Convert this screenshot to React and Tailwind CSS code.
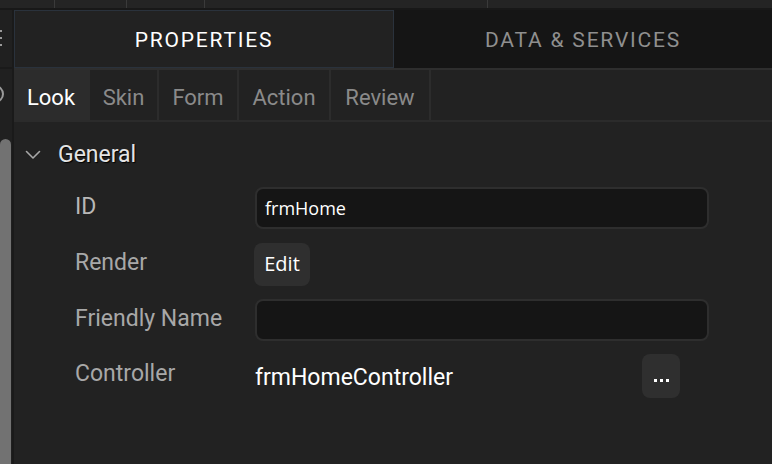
import React from "react";

function Chevron() {
  return (
    <svg width="16" height="10" viewBox="0 0 16 10" fill="none">
      <path d="M1.5 1.5 L8 8 L14.5 1.5" stroke="#a8a8a8" strokeWidth="1.6" strokeLinecap="round" strokeLinejoin="round" />
    </svg>
  );
}

export default function App() {
  const subtabs = [
    { label: "Look", w: "w-[76px]", active: true },
    { label: "Skin", w: "w-[69px]" },
    { label: "Form", w: "w-[80px]" },
    { label: "Action", w: "w-[92px]" },
    { label: "Review", w: "w-[100px]" },
  ];
  return (
    <div className="w-[772px] h-[464px] overflow-hidden bg-[#222222] flex flex-col font-['Roboto',sans-serif]">
      {/* top strip */}
      <div className="h-[10px] flex bg-[#242424] border-b-2 border-[#181818] shrink-0">
        <div className="w-[55px] border-r border-[#3a3a3a]" />
        <div className="w-[72px] border-r border-[#3a3a3a]" />
        <div className="w-[78px] border-r border-[#3a3a3a]" />
        <div className="w-[283px] border-r border-[#3a3a3a]" />
        <div className="flex-1" />
      </div>
      <div className="flex flex-1 min-h-0">
        {/* left sidebar */}
        <div className="w-[14px] shrink-0 flex flex-col bg-[#202020] border-r-2 border-[#1a1a1a]">
          <div className="h-[59px] border-b-2 border-[#1a1a1a] relative overflow-hidden">
            <div className="absolute left-[-6px] top-[20px] w-[8px] flex flex-col gap-[5px]">
              <div className="h-[2px] bg-[#9a9a9a]" />
              <div className="h-[2px] bg-[#9a9a9a]" />
              <div className="h-[2px] bg-[#9a9a9a]" />
            </div>
          </div>
          <div className="h-[70px] relative overflow-hidden">
            <div className="absolute left-[-14px] top-[16px] w-[18px] h-[18px] rounded-full border-2 border-[#9a9a9a]" />
          </div>
          <div className="flex-1 mr-[1px] bg-[#727272] rounded-t-[6px]" />
        </div>
        {/* main */}
        <div className="flex-1 flex flex-col">
          {/* header tabs */}
          <div className="h-[60px] flex border-b-2 border-[#2e2e2e] shrink-0">
            <div className="w-[380px] pt-[3px] bg-[#222222] border border-[#2a323c] flex items-center justify-center text-white text-[21px] tracking-[1.8px]">
              PROPERTIES
            </div>
            <div className="flex-1 pt-[3px] bg-[#151515] flex items-center justify-center text-[#8f8f8f] text-[21px] tracking-[1.8px]">
              DATA &amp; SERVICES
            </div>
          </div>
          {/* subtabs */}
          <div className="h-[52px] flex border-b-2 border-[#2b2b2b] shrink-0">
            {subtabs.map((t) => (
              <div
                key={t.label}
                className={`${t.w} pt-[4px] flex items-center justify-center border-r-2 border-[#2c2c2c] text-[22px] ${
                  t.active ? "bg-[#2c2c2c] text-white" : "text-[#8a8a8a]"
                }`}
              >
                {t.label}
              </div>
            ))}
            <div className="flex-1" />
          </div>
          {/* content */}
          <div className="pt-[13px] flex flex-col">
            <div className="h-[40px] flex items-center">
              <div className="w-[44px] pl-[11px] flex items-center">
                <Chevron />
              </div>
              <span className="text-[23px] text-[#e4e4e4] [text-shadow:1px_1px_1px_#000]">General</span>
            </div>
            <div className="h-[5px]" />
            <div className="h-[56px] flex items-center">
              <div className="w-[241px] pl-[61px] text-[23px] text-[#b8b8b8] -mt-[2px]">ID</div>
              <div className="w-[454px] h-[42px] rounded-[8px] bg-[#151515] border-2 border-[#2e2e2e] flex items-center pl-[8px] text-[18px] text-white font-['Open_Sans',sans-serif]">
                frmHome
              </div>
            </div>
            <div className="h-[56px] flex items-center">
              <div className="w-[240px] pl-[61px] text-[23px] text-[#a8a8a8] -mt-[2px]">Render</div>
              <div className="w-[56px] h-[43px] rounded-[8px] bg-[#2f2f2f] flex items-center justify-center text-[20px] text-white font-['Open_Sans',sans-serif]">
                Edit
              </div>
            </div>
            <div className="h-[56px] flex items-center">
              <div className="w-[241px] pl-[61px] text-[23px] text-[#a8a8a8] -mt-[2px]">Friendly Name</div>
              <div className="w-[454px] h-[42px] rounded-[8px] bg-[#151515] border-2 border-[#2e2e2e]" />
            </div>
            <div className="h-[56px] flex items-center">
              <div className="w-[241px] pl-[61px] text-[23px] text-[#a8a8a8] -mt-[4px]">Controller</div>
              <div className="w-[387px] text-[23px] text-white mt-[5px]">frmHomeController</div>
              <div className="w-[38px] h-[44px] rounded-[8px] bg-[#2f2f2f] flex items-center justify-center gap-[3px] pt-[8px]">
                <div className="w-[3px] h-[3px] bg-white" />
                <div className="w-[3px] h-[3px] bg-white" />
                <div className="w-[3px] h-[3px] bg-white" />
              </div>
            </div>
          </div>
        </div>
      </div>
    </div>
  );
}
